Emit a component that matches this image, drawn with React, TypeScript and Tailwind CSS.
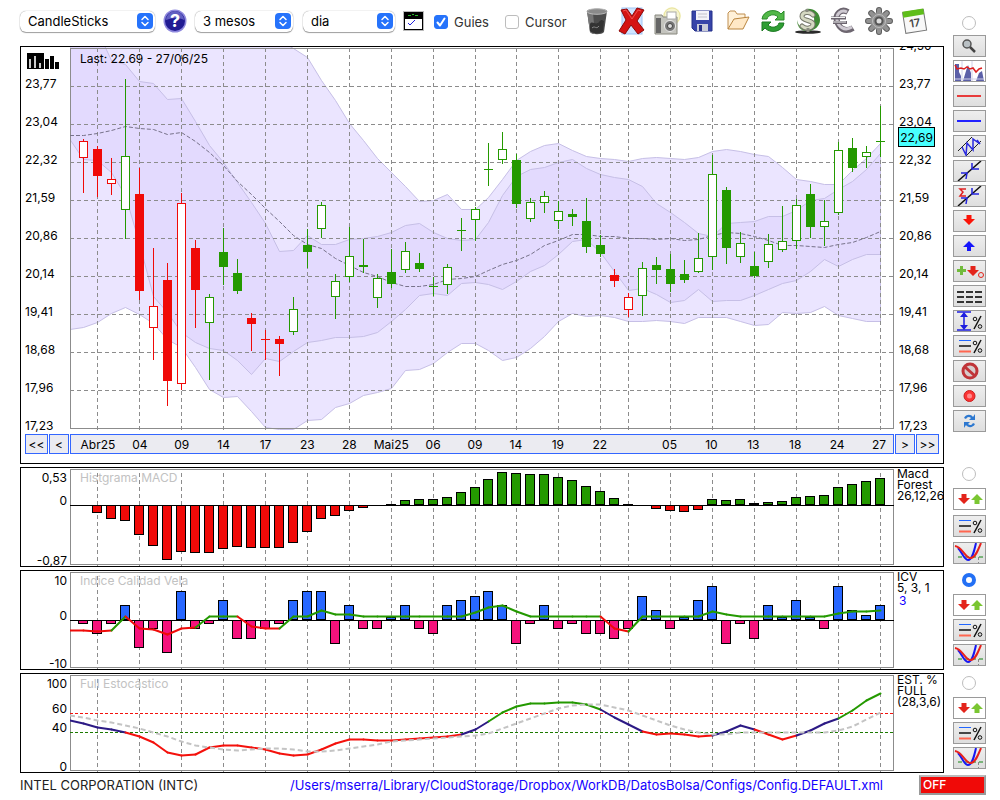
import React from 'react';

type Candle = [kind: string, high: number, top: number, bottom: number, low: number];
type Tick = [label: string, y: number];

const GREEN = '#249900';
const RED = '#f00a08';

// first letter: r = red, g = green; second: h = hollow, f = filled, d = doji
const candles: Candle[] = [
  ['rh', 139, 141, 158, 193], ['rf', 146, 149, 176, 197], ['rh', 158, 179, 184, 195], ['gh', 79, 156, 210, 239],
  ['rf', 168, 194, 291, 300], ['rh', 248, 306, 328, 360], ['rf', 263, 280, 381, 406], ['rh', 193, 203, 384, 390],
  ['rf', 240, 248, 290, 328], ['gh', 294, 297, 323, 380], ['gf', 228, 252, 267, 285], ['gf', 259, 273, 291, 294],
  ['rf', 313, 318, 324, 351], ['rd', 330, 339, 339, 360], ['rf', 336, 339, 344, 376], ['gh', 297, 309, 332, 335],
  ['gf', 229, 245, 252, 268], ['gh', 202, 205, 229, 238], ['gh', 274, 281, 297, 319], ['gh', 227, 256, 277, 282],
  ['gf', 239, 265, 267, 273], ['gh', 274, 278, 298, 308], ['gf', 249, 272, 284, 288], ['gh', 242, 251, 270, 273],
  ['gf', 253, 263, 269, 272], ['gd', 277, 286, 286, 296], ['gh', 264, 267, 285, 294], ['gd', 218, 230, 230, 251],
  ['gh', 207, 209, 220, 241], ['gd', 143, 169, 169, 186], ['gh', 132, 149, 160, 164], ['gf', 154, 160, 204, 208],
  ['gh', 198, 202, 219, 222], ['gh', 191, 196, 203, 213], ['gh', 201, 211, 221, 229], ['gf', 209, 214, 217, 226],
  ['gf', 198, 221, 247, 253], ['gf', 235, 245, 254, 257], ['rf', 269, 275, 281, 287], ['rh', 293, 297, 310, 317],
  ['gh', 262, 268, 296, 316], ['gf', 257, 265, 270, 284], ['gf', 254, 269, 284, 292], ['gf', 260, 274, 280, 283],
  ['gh', 233, 258, 272, 273], ['gh', 155, 174, 257, 270], ['gf', 187, 190, 248, 264], ['gh', 232, 243, 257, 263],
  ['gf', 252, 266, 276, 278], ['gh', 234, 244, 262, 268], ['gh', 206, 241, 250, 252], ['gh', 199, 205, 241, 249],
  ['gf', 184, 194, 227, 238], ['gh', 200, 221, 227, 246], ['gh', 142, 150, 213, 215], ['gf', 138, 148, 168, 172],
  ['gh', 146, 152, 157, 168], ['gd', 106, 141, 141, 157],
];

const candleX = (i: number) => (i < 29 ? 83 + 14 * i : 82 + 14 * i);

// Each series starts at the left edge of the plot, then follows the candles
const outerUpper = [
  20, 20, 20, 20, 20, 20, 20, 20, 20, 20, 20, 20, 22, 26, 32, 40, 48, 57, 80, 100, 123, 140, 158, 172, 186, 201, 200, 194, 209, 209,
  197, 179, 160, 151, 145, 143, 150, 156, 158, 159, 161, 158, 157, 158, 159, 157, 151, 149, 151, 154, 156, 167, 179, 181, 184, 184, 170, 158, 143,
];
const outerLower = [
  329, 327, 322, 313, 307, 314, 323, 339, 347, 367, 389, 397, 396, 411, 427, 429, 429, 420, 419, 407, 403, 395, 392, 388, 370, 369, 363, 352, 343, 343,
  350, 360, 357, 348, 336, 321, 313, 316, 315, 317, 321, 321, 320, 321, 323, 317, 317, 317, 321, 325, 324, 312, 313, 312, 306, 315, 318, 321, 321,
];
const innerUpper = [
  20, 24, 30, 60, 64, 81, 83, 99, 98, 121, 145, 162, 182, 202, 223, 251, 250, 235, 244, 244, 239, 238, 236, 232, 225, 223, 232, 238, 240, 239,
  222, 195, 176, 169, 167, 162, 159, 168, 174, 177, 179, 186, 203, 212, 222, 233, 236, 223, 222, 221, 216, 216, 210, 200, 198, 189, 181, 169, 153,
];
const innerLower = [
  139, 159, 160, 172, 195, 243, 296, 312, 332, 342, 348, 350, 360, 374, 358, 361, 351, 342, 340, 337, 337, 336, 332, 321, 309, 295, 293, 295, 283, 282,
  284, 289, 281, 271, 265, 254, 241, 239, 252, 271, 290, 288, 294, 302, 300, 289, 301, 300, 300, 295, 289, 283, 280, 271, 259, 266, 259, 254, 254,
];
const middle = [
  135, 135, 133, 130, 126, 128, 129, 134, 132, 141, 152, 165, 181, 194, 208, 221, 235, 244, 248, 258, 265, 272, 276, 282, 286, 286, 284, 279, 278, 276,
  270, 264, 260, 254, 245, 240, 234, 234, 236, 236, 238, 238, 239, 238, 240, 239, 235, 232, 233, 236, 240, 245, 245, 246, 247, 244, 242, 237, 231,
];

const macd = [
  0, -7, -13, -15, -29, -40, -54, -46, -47, -47, -43, -41, -42, -42, -42, -37, -26, -13, -10, -5, -2, 0, 1, 5, 6, 6, 8, 13, 18,
  26, 33, 32, 31, 31, 28, 25, 19, 14, 7, 1, 0, -3, -5, -6, -4, 6, 5, 6, 2, 3, 4, 8, 9, 10, 18, 21, 24, 27,
];
const icv = [
  -3, -13, -3, 15, -27, -8, -32, 29, -8, -3, 20, -18, -18, -8, -3, 20, 29, 29, -23, 15, -8, -8, 3, 15, -8, -13, 15, 20, 24,
  29, 15, -23, -3, 15, -8, -3, -13, -13, -18, -8, 24, 10, -8, 3, 20, 34, -23, -3, -18, 15, 3, 20, 3, -8, 34, 10, 5, 15,
];
const icvLine = [
  630, 630, 631, 630, 616, 628, 629, 634, 628, 627, 616, 616, 616, 626, 628, 628, 616, 616, 610, 614, 614, 616, 616, 616, 616, 616, 616, 616, 616, 612,
  607, 605, 611, 616, 616, 616, 616, 616, 616, 628, 631, 616, 616, 616, 616, 616, 611, 614, 616, 616, 616, 616, 616, 616, 616, 613, 611, 611, 610,
];
const slow = [
  720, 723, 727, 729, 732, 736, 742, 752, 755, 754, 747, 745, 745, 747, 749, 753, 755, 754, 749, 743, 739, 739, 740, 740, 739, 738, 737, 736, 734, 729,
  721, 712, 706, 703, 703, 702, 702, 704, 709, 717, 724, 731, 734, 733, 734, 736, 735, 731, 725, 729, 734, 739, 735, 730, 723, 718, 710, 700, 693,
];
const signal = [
  715, 717, 720, 722, 725, 728, 732, 736, 741, 745, 747, 749, 750, 749, 748, 748, 749, 751, 751, 750, 748, 746, 744, 741, 740, 739, 738, 737, 736, 735,
  733, 728, 723, 718, 713, 708, 705, 704, 704, 707, 710, 715, 720, 725, 729, 732, 734, 734, 732, 732, 732, 732, 732, 732, 732, 730, 726, 719, 712,
];

const guides: [string, number][] = [
  ['Abr25', 97], ['04', 139], ['09', 181], ['14', 223], ['17', 265], ['23', 307], ['28', 349], ['Mai25', 391], ['06', 433], ['09', 475],
  ['14', 516], ['19', 558], ['22', 600], ['', 628], ['05', 670], ['10', 712], ['13', 754], ['18', 796], ['24', 838], ['27', 880],
];

const prices = ['23,77', '23,04', '22,32', '21,59', '20,86', '20,14', '19,41', '18,68', '17,96', '17,23'];

const points = (ys: number[]) => ys.map((y, i) => `${i === 0 ? 70 : candleX(i - 1) + 0.5},${y + 0.5}`);
const band = (a: number[], b: number[]) => [...points(a), ...points(b).reverse()].join(' ');

const Guides: React.FC<{ from: number; to: number }> = ({ from, to }) => (
  <g stroke="#8c8c8c" strokeDasharray="4 3" shapeRendering="crispEdges">
    {guides.map(([, x]) => <line key={x} x1={x + 0.5} x2={x + 0.5} y1={from} y2={to} />)}
  </g>
);

const Frame: React.FC<{ top: number; bottom: number }> = ({ top, bottom }) => (
  <rect x="70.5" y={top + 0.5} width="823" height={bottom - top} fill="none" stroke="#8c8c8c" shapeRendering="crispEdges" />
);

const Bars: React.FC<{ data: number[]; zero: number; up: string; down: string }> = ({ data, zero, up, down }) => (
  <g stroke="#000" shapeRendering="crispEdges">
    {data.map((v, i) => v !== 0 && (
      <rect key={i} x={candleX(i) - 4.5} y={v > 0 ? zero - v + 0.5 : zero + 0.5} width="9" height={v > 0 ? Math.max(v - 1, 0.5) : -v} fill={v > 0 ? up : down} />
    ))}
    <line x1="70" x2="895" y1={zero + 0.5} y2={zero + 0.5} />
  </g>
);

// Splits a line into one coloured piece per candle step
const Steps: React.FC<{ data: number[]; color: (i: number) => string }> = ({ data, color }) => {
  const pts = points(data);
  return (
    <g fill="none" strokeWidth="2" strokeLinecap="round">
      {pts.slice(1).map((p, i) => <polyline key={i} points={`${pts[i]} ${p}`} stroke={color(i)} />)}
    </g>
  );
};

const icvColor = (i: number) => (i < 3 || (i > 3 && i < 9) || (i > 11 && i < 15) || (i > 37 && i < 40) ? RED : GREEN);
const slowColor = (i: number) => {
  if (i < 4 || (i > 27 && i < 30) || (i > 37 && i < 41) || (i > 45 && i < 49) || (i > 51 && i < 55)) return '#2c1a85';
  if ((i > 29 && i < 38) || i > 54) return GREEN;
  return '#f4110c';
};

const Axis: React.FC<{ ticks: Tick[]; origin: number }> = ({ ticks, origin }) => (
  <div className="relative w-[49px] shrink-0 text-right">
    {ticks.map(([label, y]) => (
      <span key={label} className="absolute right-[3px] -translate-y-1/2 leading-4" style={{ top: y - origin }}>{label}</span>
    ))}
  </div>
);

interface PanelProps {
  title: string;
  origin: number;
  ticks: Tick[];
  legend: React.ReactNode;
  children: React.ReactNode;
}

const Indicator: React.FC<PanelProps> = ({ title, origin, ticks, legend, children }) => (
  <section className="flex h-[100px] min-w-0 flex-1 border border-black">
    <Axis ticks={ticks} origin={origin} />
    <div className="relative min-w-0 flex-1">
      <svg className="block h-full w-full" viewBox={`70 ${origin} 824 98`} preserveAspectRatio="none" role="img" aria-label={title}>
        {children}
      </svg>
      <h2 className="absolute left-[10px] top-[2px] leading-4 text-[#c2c2c2]">{title}</h2>
    </div>
    <div className="w-[49px] shrink-0 overflow-hidden whitespace-nowrap pl-[3px] leading-[11px]">{legend}</div>
  </section>
);

const Tool: React.FC<{ label: string; plain?: boolean; children: React.ReactNode }> = ({ label, plain, children }) => (
  <button
    type="button"
    aria-label={label}
    className={`h-[22px] w-[33px] shrink-0 border border-[#9a9a9a] ${plain ? 'bg-white' : 'bg-linear-to-b from-[#eeeeee] to-[#dedede]'}`}
  >
    <svg viewBox="0 0 31 20" className="block h-full w-full" fill="none">{children}</svg>
  </button>
);

const Radio: React.FC<{ label: string; checked?: boolean }> = ({ label, checked }) => (
  <input
    type="radio"
    name="panel"
    aria-label={label}
    defaultChecked={checked}
    className="ml-[9px] block size-[14px] shrink-0 appearance-none rounded-full border border-[#bdbdbd] bg-white checked:border-4 checked:border-[#2370f5]"
  />
);

const PercentLines = () => (
  <>
    <path d="M5 4.500h12" stroke="#2266ff" />
    <path d="M5 10h12" stroke="#111" strokeWidth="1.500" />
    <path d="M5 15.500h12" stroke="#ff6650" strokeWidth="2" />
    <path d="M27 4L20 17" stroke="#111" strokeWidth="1.500" />
    <circle cx="21" cy="7" r="1.800" stroke="#111" />
    <circle cx="26" cy="14.500" r="1.800" stroke="#111" />
  </>
);

const downArrow = 'M7.500 0h5v4h3.500L10 10 4 4h3.500z';

const PanelTools: React.FC<{ name: string; checked?: boolean; first?: boolean }> = ({ name, checked, first }) => (
  <aside className={`flex flex-col ${first ? '' : 'pt-[3px]'}`}>
    <Radio label={name} checked={checked} />
    <div className={`mt-[7px] flex flex-col ${first ? 'gap-[5px]' : 'gap-[3px]'}`}>
      <Tool label={`${name}: canvi`} plain>
        <path transform="translate(0 5)" d={downArrow} fill="#e3241b" />
        <path d="M20.500 15h5v-4H29L23 5l-6 6h3.500z" fill="#7ac632" />
      </Tool>
      <Tool label={`${name}: percentatge`}><PercentLines /></Tool>
      <Tool label={`${name}: senyal`}>
        <path d="M4 14h25" stroke="#138513" strokeDasharray="4 3" />
        <path d="M24.500 14v6" stroke="#888" strokeDasharray="3 2" />
        <path d="M4 5C8 9 10 17 14 17S20 9 22 0" stroke="#1717f2" strokeWidth="2" />
        <path d="M1 3C8 4 11 14 16 15S24 7 27 0" stroke="#e8221c" strokeWidth="2" />
      </Tool>
    </div>
  </aside>
);

const Picker: React.FC<{ label: string; value: string; width: string }> = ({ label, value, width }) => (
  <div className={`relative shrink-0 ${width}`}>
    <select aria-label={label} className="h-[21px] w-full appearance-none rounded-md bg-white pl-2 text-[13px] leading-5 shadow-[0_0_1px_rgba(0,0,0,0.5),0_1px_1px_rgba(0,0,0,0.35)]">
      <option>{value}</option>
    </select>
    <svg viewBox="0 0 16 16" className="pointer-events-none absolute right-[2px] top-[2px] size-4" fill="none">
      <rect width="16" height="16" rx="4" fill="#2673fb" />
      <path d="M5 6.500l3-3 3 3M5 9.500l3 3 3-3" stroke="#fff" strokeWidth="1.500" strokeLinecap="round" strokeLinejoin="round" />
    </svg>
  </div>
);

const actions: { label: string; art: React.ReactNode }[] = [
  {
    label: 'Esborrar',
    art: (
      <>
        <path d="M4 4c0-3 20-3 20 0l-3 21c-2 3-12 3-14 0z" fill="#4d4d4d" />
        <path d="M4 4l3 21c1 1 3 2 5 2L10 6z" fill="#777" />
        <ellipse cx="14" cy="4.500" rx="10" ry="2.800" fill="#8a8a8a" stroke="#bbb" />
        <path d="M7 17c2-4 6 2 9-2s4-1 5-1l-1 10c-2 3-11 3-13 0z" fill="#333" />
        <path d="M9 21c3-3 4 2 7-2" stroke="#888" />
      </>
    ),
  },
  {
    label: 'Treure tot',
    art: (
      <>
        <rect x="4" y="1" width="20" height="26" fill="#cfe4ff" stroke="#9fc5f5" />
        <path d="M3 3l6-1 5 7 5-8 7 2-7 11 7 9-6 4-7-9-6 9-6-3 7-11z" fill="#d51313" stroke="#8d0808" />
        <path d="M5 4l3-1 6 9 6-9 3 1" stroke="#f05050" />
      </>
    ),
  },
  {
    label: 'Captura',
    art: (
      <>
        <circle cx="19" cy="9" r="9" fill="#f7f5cf" />
        <circle cx="19" cy="9" r="8" stroke="#e9e4a0" />
        <path d="M2 8h7l1 2h14v17H2z" fill="#c4c4be" stroke="#88887f" />
        <path d="M3 11h5v15H3z" fill="#666" />
        <rect x="14" y="5" width="9" height="7" fill="#fff" stroke="#aaa" />
        <circle cx="17" cy="19" r="5.500" fill="#777" stroke="#eee" />
        <circle cx="17" cy="19" r="2.500" fill="#ddd" stroke="#444" />
      </>
    ),
  },
  {
    label: 'Desar',
    art: (
      <>
        <path d="M4 4h20v20H7l-3-3z" fill="#3744a8" stroke="#25308a" />
        <path d="M8 4h13v9H8z" fill="#f3f3f8" />
        <path d="M9 17h11v7H9z" fill="#c9cbd8" />
        <path d="M11 18h3v6h-3z" fill="#25308a" />
        <path d="M10 7h9M10 10h9" stroke="#c3c3cc" />
      </>
    ),
  },
  {
    label: 'Obrir',
    art: (
      <>
        <path d="M4 22V6l2-2h5l2 3h8v5" fill="#fff1d9" stroke="#c08f50" />
        <path d="M4 22l6-10 15-2-6 12z" fill="#ffe8c6" stroke="#b9853f" />
      </>
    ),
  },
  {
    label: 'Actualitzar',
    art: (
      <>
        <path d="M3 12C4 3 17 1 22 7l3-3v9h-9l3-3C15 6 9 8 8 12z" fill="#52b848" stroke="#2a8a2a" />
        <path d="M25 16c-1 9-14 11-19 5l-3 3v-9h9l-3 3c4 4 10 2 11-2z" fill="#2e9e33" stroke="#1c7a22" />
      </>
    ),
  },
  {
    label: 'Dolar',
    art: (
      <>
        <ellipse cx="14" cy="25" rx="13" ry="1.800" fill="#2b2b2b" />
        <path d="M12 2c8-1 14 4 14 11 0 6-5 10-11 11l3-5c5-7 1-13-6-17z" fill="#3f8a35" />
        <path d="M3 13c1 5 4 8 9 9l-1 2C6 23 3 19 3 13z" fill="#5f9a52" />
        <path d="M19 8C16 4 8 5 8 9.500S19 13 19 17s-7 6-11 2" stroke="#77786c" strokeWidth="5" strokeLinecap="round" />
        <path d="M19 8C16 4 8 5 8 9.500S19 13 19 17s-7 6-11 2" stroke="#d5d8c2" strokeWidth="3" strokeLinecap="round" />
        <path d="M13 2v3M14 21v4" stroke="#8a8b80" strokeWidth="3" />
      </>
    ),
  },
  {
    label: 'Euro',
    art: (
      <>
        <path d="M19 5C12 1 6 7 8 14s8 12 16 7" stroke="#6d6670" strokeWidth="6" />
        <path d="M18 5C12 2 7 7 8 13s7 12 15 7" stroke="#cfcad2" strokeWidth="3" />
        <path d="M2 11h15M4 15.500h14" stroke="#6d6670" strokeWidth="3" />
        <path d="M2 10.500h14M4 15h13" stroke="#eee" />
      </>
    ),
  },
  {
    label: 'Configurar',
    art: (
      <>
        <g stroke="#5d5d5d" strokeWidth="6" strokeLinecap="round">
          <path d="M14 3v22M3 14h22M6.200 6.200l15.600 15.600M6.200 21.800L21.800 6.200" />
        </g>
        <g stroke="#929292" strokeWidth="4" strokeLinecap="round">
          <path d="M14 3v22M3 14h22M6.200 6.200l15.600 15.600M6.200 21.800L21.800 6.200" />
        </g>
        <circle cx="14" cy="14" r="9" fill="#929292" />
        <circle cx="14" cy="14" r="6.500" stroke="#bcbcbc" />
        <circle cx="14" cy="14" r="4.500" fill="#555" />
        <circle cx="14" cy="14" r="2.500" fill="#ddd" />
      </>
    ),
  },
  {
    label: 'Calendari',
    art: (
      <g transform="rotate(-9 14 14)">
        <rect x="4" y="4" width="21" height="21" fill="#f8f8f8" stroke="#777" />
        <rect x="4" y="3" width="21" height="6" fill="#5ebd1a" />
        <text x="14.500" y="20" textAnchor="middle" fontSize="11" fontWeight="600" fill="#444">17</text>
      </g>
    ),
  },
];

const App: React.FC = () => {
  return (
    <main className="flex min-h-screen flex-col bg-white pl-5 pr-[14px] font-[Inter,sans-serif] text-xs text-black">
      {/* Toolbar */}
      <header className="flex h-[42px] items-center">
        <Picker label="Tipus de gràfic" value="CandleSticks" width="w-[135px]" />
        <button type="button" aria-label="Ajuda" className="ml-2 shrink-0">
          <svg viewBox="0 0 24 24" className="size-6">
            <circle cx="12" cy="12" r="11.500" fill="#8e88dd" />
            <circle cx="12" cy="12" r="10" fill="#211b93" />
            <path d="M3 11a9 9 0 0 1 18 0c-6-3-12-2-18 0z" fill="#625fc1" />
            <text x="12" y="18" textAnchor="middle" fontSize="18" fontWeight="700" fill="#fff">?</text>
          </svg>
        </button>
        <div className="ml-2 flex shrink-0 items-center gap-[10px]">
          <Picker label="Període" value="3 mesos" width="w-[98px]" />
          <Picker label="Interval" value="dia" width="w-[92px]" />
        </div>
        <button type="button" aria-label="Indicadors" className="ml-2 shrink-0">
          <svg viewBox="0 0 21 20" className="h-5 w-[21px]" fill="none" shapeRendering="crispEdges">
            <rect width="21" height="20" fill="#bbb" />
            <rect x="1" y="1" width="19" height="6" fill="#000" />
            <path d="M5 4.500h3M9 3.500h2M12 4.500h3" stroke="#25b925" />
            <rect x="1.500" y="7.500" width="18" height="11" fill="#fff" stroke="#000" />
            <path d="M5 12l2 2 2-2 3-3" stroke="#2020dd" />
          </svg>
        </button>
        <label className="ml-[10px] flex shrink-0 items-center gap-[6px] pt-[3px] text-[13px] text-[#333]">
          <span className="relative flex">
            <input type="checkbox" defaultChecked className="peer size-[14px] appearance-none rounded-[3px] border border-[#bdbdbd] checked:border-[#2673fb] checked:bg-[#2673fb]" />
            <svg viewBox="0 0 14 14" className="pointer-events-none absolute inset-0 hidden size-[14px] peer-checked:block" fill="none">
              <path d="M3.500 7.500L6 10.500l4.500-7" stroke="#fff" strokeWidth="2" strokeLinecap="round" strokeLinejoin="round" />
            </svg>
          </span>
          Guies
        </label>
        <label className="ml-4 flex shrink-0 items-center gap-[6px] pt-[3px] text-[13px] text-[#333]">
          <input type="checkbox" className="size-[14px] appearance-none rounded-[3px] border border-[#bdbdbd] checked:bg-[#2673fb]" />
          Cursor
        </label>
        <div className="ml-4 flex flex-1 justify-between">
          {actions.map(({ label, art }) => (
            <button key={label} type="button" aria-label={label}>
              <svg viewBox="0 0 28 28" className="size-7" fill="none">{art}</svg>
            </button>
          ))}
        </div>
        <div className="ml-[25px] w-[33px] shrink-0 pt-[3px]"><Radio label="Preus" /></div>
      </header>

      {/* Price chart */}
      <div className="mt-1 flex gap-[9px]">
        <section className="h-[418px] min-w-0 flex-1 overflow-hidden border border-black">
          <div className="flex h-[384px]">
            <div className="w-[49px] shrink-0 pl-1">
              <svg viewBox="0 0 32 18" className="ml-[2px] mt-[6px] h-[18px] w-8" shapeRendering="crispEdges">
                <path d="M0 0h17v16H0z" />
                <path d="M2 6h2v9H2zM7 3h2v12H7zM12 10h2v5h-2z" fill="#ccc" />
                <path d="M18 6h4v10h-4zM23 3h4v13h-4zM28 9h4v7h-4z" />
              </svg>
              <ul className="-mt-[6px] leading-[38px]">
                {prices.map((p) => <li key={p}>{p}</li>)}
              </ul>
            </div>
            <div className="relative min-w-0 flex-1">
              <svg className="block h-full w-full" viewBox="70 47 824 384" preserveAspectRatio="none" fill="none" role="img" aria-label="Gràfic de preus">
                <g stroke="#c6bfe6">
                  <polygon points={band(outerUpper, outerLower)} fill="#ebe5ff" />
                  <polygon points={band(innerUpper, innerLower)} fill="#e3dafe" />
                </g>
                <Guides from={48} to={430} />
                <g stroke="#8c8c8c" strokeDasharray="4 3" shapeRendering="crispEdges">
                  {prices.slice(0, 9).map((p, i) => <line key={p} x1="70" x2="894" y1={86.5 + i * 38} y2={86.5 + i * 38} />)}
                </g>
                <Frame top={48} bottom={428} />
                <polyline points={points(middle).join(' ')} stroke="#77728a" strokeDasharray="4 2" />
                {candles.map(([kind, high, top, bottom, low], i) => {
                  const color = kind[0] === 'r' ? RED : GREEN;
                  const x = candleX(i);
                  return (
                    <g key={i} stroke={color} shapeRendering="crispEdges">
                      <line x1={x + 0.5} x2={x + 0.5} y1={high} y2={low} />
                      {kind[1] === 'd'
                        ? <line x1={x - 4} x2={x + 5} y1={top + 0.5} y2={top + 0.5} />
                        : <rect x={x - 3.5} y={top + 0.5} width="8" height={bottom - top - 1} fill={kind[1] === 'h' ? '#fff' : color} />}
                    </g>
                  );
                })}
              </svg>
              <p className="absolute left-[10px] top-1 leading-4">Last: 22.69 - 27/06/25</p>
            </div>
            <div className="relative w-[49px] shrink-0 pl-[5px]">
              <ul className="-mt-5 leading-[38px]">
                {['24,50', ...prices].map((p) => <li key={p}>{p}</li>)}
              </ul>
              <output className="absolute left-1 top-[80px] h-5 w-[37px] border border-black bg-[#48ffff] text-center leading-5">22,69</output>
            </div>
          </div>
          <nav className="mt-[3px] flex h-5 gap-px px-1 leading-5 *:border *:border-[#3366ff] *:bg-[#ebebf1]">
            <button type="button" className="w-[23px] shrink-0">&lt;&lt;</button>
            <button type="button" className="w-5 shrink-0">&lt;</button>
            <div className="relative min-w-0 flex-1">
              {guides.map(([label, x]) => (
                <span key={x} className="absolute -translate-x-1/2" style={{ left: `${((x - 70) / 824) * 100}%` }}>{label}</span>
              ))}
            </div>
            <button type="button" className="w-5 shrink-0">&gt;</button>
            <button type="button" className="w-[23px] shrink-0">&gt;&gt;</button>
          </nav>
        </section>
        <aside className="flex w-[33px] shrink-0 flex-col gap-[3px] -mt-[11px]">
          <Tool label="Zoom">
            <circle cx="13" cy="8" r="4" fill="#b9c0c4" stroke="#555" strokeWidth="1.500" />
            <path d="M16 11l5 5" stroke="#444" strokeWidth="2.500" />
          </Tool>
          <Tool label="Volum" plain>
            <path d="M1 20V3h4v8l2 4v5zM9 20l3-10 2-6 3 8v8zM22 20l3-8 3-2 2 10z" fill="#5c60a8" />
            <path d="M8 0v20M18 0v20M1 18h29" stroke="#d0d0e8" />
            <path d="M1 4l2 4 4-1 3 1 3-2 3 2 3-1 3 4 3-3 3-1" stroke="#dd2020" strokeWidth="1.500" />
          </Tool>
          <Tool label="Línia vermella"><path d="M3 10h24" stroke="#e83b3b" strokeWidth="2" /></Tool>
          <Tool label="Línia blava"><path d="M3 10h24" stroke="#2222ff" strokeWidth="2" /></Tool>
          <Tool label="Canal">
            <path d="M4 15L18 1M12 20L27 5" stroke="#222" />
            <path d="M8 11l4 8 1-12 6 7V3l7 5-3-4" stroke="#2a2ae0" strokeWidth="1.500" />
          </Tool>
          <Tool label="Tendència">
            <path d="M4 20L27 0" stroke="#111" strokeWidth="1.500" />
            <path d="M7 12h6l-1 6M18 2v6h7" stroke="#2323dd" strokeWidth="1.500" />
          </Tool>
          <Tool label="Suma">
            <path d="M4 20L27 0" stroke="#111" strokeWidth="1.500" />
            <path d="M7 12h6l-1 6M18 2v6h7" stroke="#2323dd" strokeWidth="1.500" />
            <path d="M12 3H6l3 3-3 4h6" stroke="#e02020" strokeWidth="1.500" />
          </Tool>
          <Tool label="Venda"><path transform="translate(5 4)" d={downArrow} fill="#fb1307" /></Tool>
          <Tool label="Compra"><path d="M13 15h4v-4h4l-6-6-6 6h4z" fill="#1515fb" /></Tool>
          <Tool label="Senyals">
            <path d="M7.500 5v9M3 9.500h9" stroke="#71bb3c" strokeWidth="3" />
            <path transform="translate(9 5)" d={downArrow} fill="#e3241b" />
            <circle cx="27" cy="14" r="2.500" stroke="#e3241b" />
          </Tool>
          <Tool label="Guions"><path d="M3 6h25M3 11h25M3 16h25" stroke="#333" strokeWidth="2" strokeDasharray="7 2" /></Tool>
          <Tool label="Amplada">
            <path d="M3 1h14M3 19h14M10 3v14" stroke="#1d1ddf" strokeWidth="1.500" />
            <path d="M10 1l4 5H6zM10 19l4-5H6z" fill="#1d1ddf" />
            <path d="M27 5L20 18" stroke="#111" strokeWidth="1.500" />
            <circle cx="21" cy="8" r="1.800" stroke="#111" />
            <circle cx="26" cy="15.500" r="1.800" stroke="#111" />
          </Tool>
          <Tool label="Percentatges"><PercentLines /></Tool>
          <Tool label="Prohibit">
            <circle cx="16" cy="10" r="7" fill="#d7cccc" stroke="#c03438" strokeWidth="3" />
            <path d="M11 6l10 9" stroke="#c03438" strokeWidth="3" />
          </Tool>
          <Tool label="Gravar">
            <circle cx="15.500" cy="10" r="5.500" fill="#fb3434" stroke="#c92020" />
            <circle cx="15.500" cy="10" r="2.500" fill="#ff8a8a" />
          </Tool>
          <Tool label="Recarregar">
            <path d="M10 7c2-4 7-4 9-1l2-3v6h-6l2-2c-2-2-4-1-5 1z" fill="#2d78d0" />
            <path d="M21 13c-2 4-7 4-9 1l-2 3v-6h6l-2 2c2 2 4 1 5-1z" fill="#2d78d0" />
          </Tool>
        </aside>
      </div>

      {/* Indicators */}
      <div className="mt-[3px] flex flex-col gap-[3px]">
        <div className="flex gap-[9px]">
          <Indicator title="Histgrama MACD" origin={468} ticks={[['0,53', 478], ['0', 501], ['-0,87', 561]]} legend={<>Macd<br />Forest<br />26,12,26</>}>
            <Guides from={473} to={566} />
            <Frame top={469} bottom={564} />
            <Bars data={macd} zero={505} up={GREEN} down={RED} />
          </Indicator>
          <PanelTools name="MACD" first />
        </div>
        <div className="flex gap-[9px]">
          <Indicator title="Indice Calidad Vela" origin={571} ticks={[['10', 581], ['0', 616], ['-10', 664]]} legend={<>ICV<br />5, 3, 1<p className="pl-[2px] pt-[2px] text-[#1400ff]">3</p></>}>
            <Guides from={576} to={669} />
            <Frame top={572} bottom={667} />
            <Bars data={icv} zero={620} up="#2867ff" down="#f5127c" />
            <Steps data={icvLine} color={icvColor} />
          </Indicator>
          <PanelTools name="ICV" checked />
        </div>
        <div className="flex gap-[9px]">
          <Indicator title="Full Estocástico" origin={674} ticks={[['100', 684], ['60', 709], ['40', 728], ['0', 767]]} legend={<>EST. %<br />FULL<br />(28,3,6)</>}>
            <Guides from={679} to={772} />
            <Frame top={675} bottom={770} />
            <g strokeDasharray="3 2" shapeRendering="crispEdges">
              <line x1="70" x2="895" y1="713.5" y2="713.5" stroke="#f4110c" />
              <line x1="70" x2="895" y1="732.5" y2="732.5" stroke="#1c7a00" />
            </g>
            <Steps data={slow} color={slowColor} />
            <polyline points={points(signal).join(' ')} fill="none" stroke="#c4c4c4" strokeWidth="2" strokeDasharray="5 3" />
          </Indicator>
          <PanelTools name="Estocástico" />
        </div>
      </div>

      <footer className="mt-[2px] flex items-center text-[13px] leading-5">
        <span className="shrink-0 text-[#222]">INTEL CORPORATION (INTC)</span>
        <a href="#config" className="ml-auto text-[#1400ff]">/Users/mserra/Library/CloudStorage/Dropbox/WorkDB/DatosBolsa/Configs/Config.DEFAULT.xml</a>
        <button type="button" className="ml-9 h-5 w-[67px] shrink-0 border-2 border-[#999] border-t-[#bbb] bg-[#f00a08] pl-[2px] text-left text-xs font-medium leading-4 text-white">OFF</button>
      </footer>
    </main>
  );
};

export default App;
